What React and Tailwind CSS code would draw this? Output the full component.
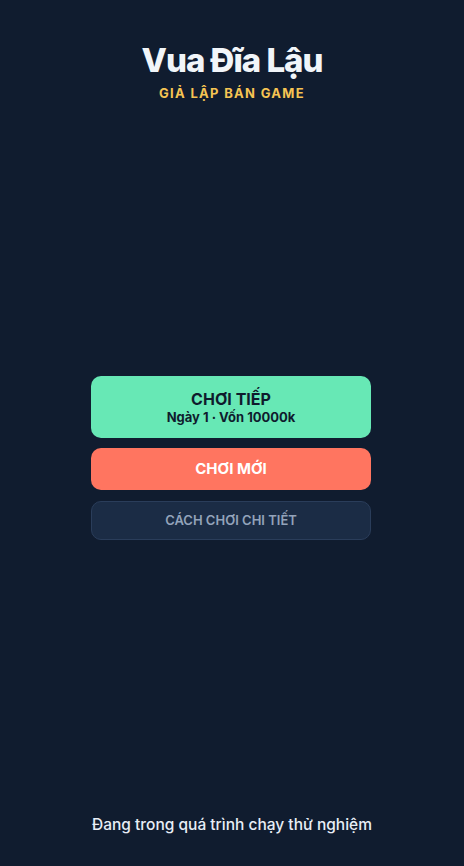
export default function App() {
  return (
    <div
      className="flex min-h-screen flex-col bg-[#101c2f] text-white"
      style={{ fontFamily: "Inter, 'Noto Sans', sans-serif" }}
    >
      <header className="flex flex-col items-center pt-[38px]">
        <h1 className="text-[33px] font-extrabold leading-[44px] tracking-[-0.03em] text-[#f1f5f9]">
          Vua Đĩa Lậu
        </h1>
        <p className="mt-[2px] text-[13px] font-bold tracking-[0.1em] text-[#f6c453]">
          GIẢ LẬP BÁN GAME
        </p>
      </header>

      <main className="flex flex-1 items-center justify-center">
        <div className="mr-[2px] flex w-[280px] flex-col gap-[10px]">
          <button className="flex h-[62px] flex-col items-center justify-center rounded-[10px] bg-[#67e8b5] text-[#0f1b2d]">
            <span className="text-[16px] font-bold leading-[20px]">CHƠI TIẾP</span>
            <span className="text-[13px] font-bold leading-[17px]">Ngày 1 · Vốn 10000k</span>
          </button>
          <button className="h-[42px] rounded-[10px] bg-[#ff7560] text-[15px] font-bold text-white">
            CHƠI MỚI
          </button>
          <button className="mt-[1px] h-[39px] rounded-[10px] border border-[#2a3d5a] bg-[#1b2c45] text-[13px] font-semibold text-[#93a3ba]">
            CÁCH CHƠI CHI TIẾT
          </button>
        </div>
      </main>

      <footer className="pb-[30px] text-center text-[15.5px] font-medium text-[#e8eef6]">
        Đang trong quá trình chạy thử nghiệm
      </footer>
    </div>
  );
}
